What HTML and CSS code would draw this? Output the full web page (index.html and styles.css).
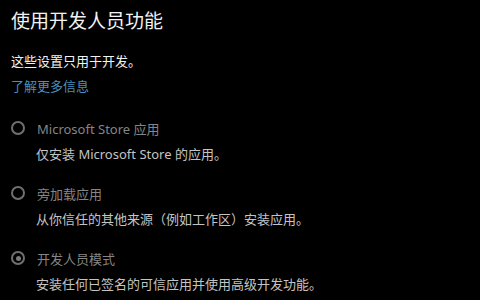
FILE: index.html
```html
<!DOCTYPE html>
<html lang="zh-CN">
<head>
  <meta charset="UTF-8">
  <title>使用开发人员功能</title>
  <link rel="stylesheet" href="styles.css">
</head>
<body>
  <div class="page">
    <h2 class="title">使用开发人员功能</h2>
    <p class="intro">这些设置只用于开发。</p>
    <a class="more-link" href="#">了解更多信息</a>

    <div class="options">
      <div class="option">
        <label class="option-row">
          <span class="radio"></span>
          <span class="option-name">Microsoft Store 应用</span>
        </label>
        <p class="option-desc">仅安装 Microsoft Store 的应用。</p>
      </div>

      <div class="option">
        <label class="option-row">
          <span class="radio"></span>
          <span class="option-name">旁加载应用</span>
        </label>
        <p class="option-desc">从你信任的其他来源（例如工作区）安装应用。</p>
      </div>

      <div class="option">
        <label class="option-row">
          <span class="radio checked"></span>
          <span class="option-name">开发人员模式</span>
        </label>
        <p class="option-desc">安装任何已签名的可信应用并使用高级开发功能。</p>
      </div>
    </div>
  </div>
</body>
</html>
```

FILE: styles.css
```css
:root {
  --bg: #000;
  --text: #f2f2f2;
  --muted: #858585;
  --desc: #c4c4c4;
  --link: #4a8fbf;
}

body {
  margin: 0;
  background-color: var(--bg);
  font-family: "Noto Sans", "Noto Sans CJK SC", sans-serif;
  color: var(--text);
}

.page {
  padding: 11px 11px 0;
  display: flex;
  flex-direction: column;
  align-items: flex-start;
}

.title {
  margin: 0;
  font-size: 19px;
  font-weight: normal;
  line-height: 20px;
}

.intro {
  margin: 21px 0 0;
  font-size: 13px;
  line-height: 18px;
}

.more-link {
  margin-top: 7px;
  font-size: 13px;
  line-height: 18px;
  color: var(--link);
  text-decoration: none;
}

.options {
  margin-top: 23px;
  display: flex;
  flex-direction: column;
  gap: 20px;
}

.option-row {
  display: flex;
  align-items: center;
  gap: 12px;
  height: 20px;
}

.radio {
  width: 14px;
  height: 14px;
  box-sizing: border-box;
  border: 2px solid #707070;
  border-radius: 50%;
  display: flex;
  justify-content: center;
  align-items: center;
}

.radio.checked::after {
  content: "";
  width: 5px;
  height: 5px;
  border-radius: 50%;
  background-color: #7a7a7a;
}

.option-name {
  font-size: 13px;
  color: var(--muted);
}

.option-desc {
  margin: 7px 0 0 25px;
  font-size: 13px;
  line-height: 18px;
  color: var(--desc);
}
```
